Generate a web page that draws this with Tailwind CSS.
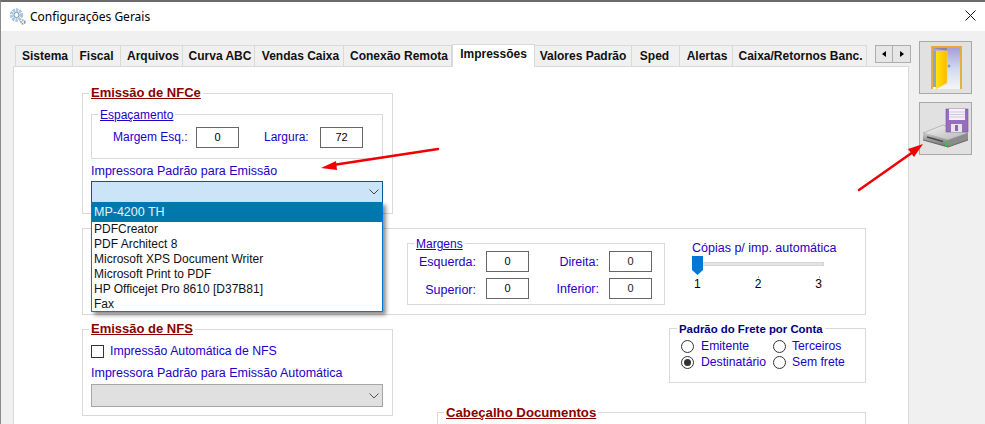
<!DOCTYPE html>
<html lang="pt-BR">
<head>
    <meta charset="UTF-8">
    <title>Configurações Gerais</title>
    <script src="https://cdn.jsdelivr.net/npm/@tailwindcss/browser@4"></script>
</head>
<body class="bg-white">
<div class="relative w-[985px] h-[424px] overflow-hidden flex flex-col border-t-2 border-l border-t-[#6b6b6b] border-l-[#8a8a8a] font-['Liberation_Sans',Arial,sans-serif] text-[12px] text-[#2200c8]">

    <!-- barra de titulo -->
    <div class="h-[29px] shrink-0 bg-white flex items-center text-black font-['Noto_Sans',sans-serif] pl-[8px] pr-[9px]">
        <svg width="18" height="17" viewBox="0 0 18 17" class="mr-[3px]">
            <circle cx="7.5" cy="7" r="5" fill="none" stroke="#a9c4dc" stroke-width="3.4" stroke-dasharray="2.4 0.8"/>
            <circle cx="7.5" cy="7" r="2.6" fill="#fff" stroke="#6d8eac" stroke-width="1"/>
            <circle cx="14" cy="14" r="2" fill="#e4eaf0" stroke="#6f7f8f" stroke-width="1.2" stroke-dasharray="1.5 1"/>
        </svg>
        <span>Configurações Gerais</span>
        <svg width="11" height="11" viewBox="0 0 11 11" class="ml-auto -mt-[2px]">
            <path d="M0.5 0.5L10.5 10.5M10.5 0.5L0.5 10.5" stroke="#111" stroke-width="1"/>
        </svg>
    </div>

    <div class="flex-1 bg-[#f0f0f0] flex overflow-hidden pl-[12px]">
        <div class="w-[897px] shrink-0 flex flex-col">
            <!-- abas -->
            <div class="h-[35px] shrink-0 flex items-end font-bold text-[12px] text-[#111] relative">
                <div class="flex items-end pl-[2px]">
                    <div class="w-[58px] h-[21px] pl-[2px] flex items-center justify-center border border-b-0 border-[#d9d9d9] bg-[#f0f0f0]">Sistema</div>
                    <div class="w-[48px] h-[21px] flex items-center justify-center border border-b-0 border-l-0 border-[#d9d9d9] bg-[#f0f0f0]">Fiscal</div>
                    <div class="w-[62px] h-[21px] pl-[3px] flex items-center justify-center border border-b-0 border-l-0 border-[#d9d9d9] bg-[#f0f0f0]">Arquivos</div>
                    <div class="w-[72px] h-[21px] pl-[3px] flex items-center justify-center border border-b-0 border-l-0 border-[#d9d9d9] bg-[#f0f0f0]">Curva ABC</div>
                    <div class="w-[89px] h-[21px] pl-[3px] flex items-center justify-center border border-b-0 border-l-0 border-[#d9d9d9] bg-[#f0f0f0]">Vendas Caixa</div>
                    <div class="w-[108px] h-[21px] pl-[3px] flex items-center justify-center border border-b-0 border-l-0 border-[#d9d9d9] bg-[#f0f0f0]">Conexão Remota</div>
                    <div class="w-[83px] h-[23px] flex items-start justify-center border border-b-0 border-[#d9d9d9] bg-white relative z-10 -mb-px">Impressões</div>
                    <div class="w-[97px] h-[21px] flex items-center justify-center border border-b-0 border-l-0 border-[#d9d9d9] bg-[#f0f0f0]">Valores Padrão</div>
                    <div class="w-[48px] h-[21px] pr-[2px] flex items-center justify-center border border-b-0 border-l-0 border-[#d9d9d9] bg-[#f0f0f0]">Sped</div>
                    <div class="w-[53px] h-[21px] pl-[2px] flex items-center justify-center border border-b-0 border-l-0 border-[#d9d9d9] bg-[#f0f0f0]">Alertas</div>
                    <div class="w-[134px] h-[21px] pl-[2px] flex items-center justify-center border border-b-0 border-l-0 border-[#d9d9d9] bg-[#f0f0f0]">Caixa/Retornos Banc.</div>
                </div>
                <div class="flex ml-[8px] mb-[3px]">
                    <div class="w-[18px] h-[18px] border border-[#adadad] bg-[#e6e6e6] flex items-center justify-center">
                        <svg width="4" height="6" viewBox="0 0 4 6"><path d="M4 0L0 3L4 6Z" fill="#000"/></svg>
                    </div>
                    <div class="w-[18px] h-[18px] border border-l-0 border-[#adadad] bg-[#e6e6e6] flex items-center justify-center">
                        <svg width="4" height="6" viewBox="0 0 4 6"><path d="M0 0L4 3L0 6Z" fill="#000"/></svg>
                    </div>
                </div>
            </div>

            <!-- painel da aba Impressoes -->
            <div class="flex-1 bg-white border-t border-l border-r border-[#d9d9d9] pl-[68px] pt-[26px] w-[896px]">

                <!-- Emissao de NFCe -->
                <div class="relative w-[311px] h-[121px] border border-[#d9d9d9] pl-[8px] pr-[9px] pt-[20px] z-20">
                    <span class="absolute left-[6px] -top-[9px] px-[2px] bg-white text-[13px] leading-[16px] font-bold underline text-[#8b0000]">Emissão de NFCe</span>
                    <div class="relative h-[45px] border border-[#d9d9d9] flex items-center pt-[1px]">
                        <span class="absolute left-[6px] -top-[7px] px-[2px] bg-white leading-[14px] underline">Espaçamento</span>
                        <span class="ml-[21px] w-[83px]">Margem Esq.:</span>
                        <div class="w-[43px] h-[21px] border border-[#666] flex items-center justify-center text-[11px] text-black">0</div>
                        <span class="ml-[25px] w-[56px]">Largura:</span>
                        <div class="w-[43px] h-[21px] border border-[#666] flex items-center justify-center text-[11px] text-black">72</div>
                    </div>
                    <div class="mt-[5px] leading-[14px] h-[17px] text-[12.5px]">Impressora Padrão para Emissão</div>
                    <div class="relative h-[22px] border border-[#005a9e] bg-[#cce4f7] flex items-center justify-end pr-[3px]">
                        <svg width="10" height="6" viewBox="0 0 10 6"><path d="M0.5 0.5L5 5L9.5 0.5" fill="none" stroke="#444"/></svg>
                        <!-- lista aberta -->
                        <div class="absolute -left-px -right-px top-[20px] h-[110px] bg-white border-x border-b border-[#0078d7] text-[#111] shadow-[3px_3px_4px_rgba(0,0,0,0.45)] leading-[15px]">
                            <div class="h-[20px] bg-[#0077ad] text-[#e8f4fa] text-[12.5px] pl-[2px] flex items-center">MP-4200 TH</div>
                            <div class="pl-[2px]">PDFCreator</div>
                            <div class="pl-[2px]">PDF Architect 8</div>
                            <div class="pl-[2px]">Microsoft XPS Document Writer</div>
                            <div class="pl-[2px]">Microsoft Print to PDF</div>
                            <div class="pl-[2px]">HP Officejet Pro 8610 [D37B81]</div>
                            <div class="pl-[2px]">Fax</div>
                        </div>
                    </div>
                </div>

                <!-- Margens e copias -->
                <div class="mt-[14px] w-[784px] h-[87px] border border-[#d9d9d9] flex pl-[324px] pt-[14px]">
                    <div class="relative w-[258px] h-[62px] border border-[#d9d9d9] grid grid-cols-[68px_43px_60px_43px] grid-rows-[21px_21px] gap-x-[10px] gap-y-[6px] items-center justify-start pt-[7px] text-[12.5px]">
                        <span class="absolute left-[6px] -top-[7px] px-[2px] bg-white leading-[14px] underline text-[12px]">Margens</span>
                        <span class="text-right mt-[2px]">Esquerda:</span>
                        <div class="h-[21px] border border-[#666] flex items-center justify-center text-[11px] text-black">0</div>
                        <span class="text-right mt-[2px]">Direita:</span>
                        <div class="h-[21px] border border-[#666] flex items-center justify-center text-[11px] text-[#2a1a1a]">0</div>
                        <span class="text-right mt-[4px]">Superior:</span>
                        <div class="h-[21px] border border-[#666] flex items-center justify-center text-[11px] text-black">0</div>
                        <span class="text-right mt-[2px]">Inferior:</span>
                        <div class="h-[21px] border border-[#666] flex items-center justify-center text-[11px] text-[#2a1a1a]">0</div>
                    </div>
                    <div class="ml-[27px] w-[146px] -mt-[2px]">
                        <div class="leading-[14px] text-[12.5px] whitespace-nowrap">Cópias p/ imp. automática</div>
                        <div class="relative h-[19px] mt-[1px]">
                            <div class="absolute left-0 right-[14px] top-[6px] h-[4px] bg-[#e3e5e5] border border-[#d6d6d6]"></div>
                            <svg width="11" height="19" viewBox="0 0 11 19" class="absolute left-0 top-0"><path d="M0 0H11V14L5.5 19L0 14Z" fill="#0078d7"/></svg>
                            <span class="absolute left-[66px] top-[20px] w-px h-[2px] bg-[#b5b5b5]"></span>
                            <span class="absolute left-[127px] top-[20px] w-px h-[2px] bg-[#b5b5b5]"></span>
                        </div>
                        <div class="flex justify-between w-[130px] text-black leading-[14px] mt-[2px] pl-[2px]">
                            <span>1</span><span>2</span><span>3</span>
                        </div>
                    </div>
                </div>

                <!-- NFS, frete e cabecalho -->
                <div class="mt-[13px] flex items-start">
                    <div class="relative w-[311px] h-[87px] mt-px border border-[#d9d9d9] pl-[8px] pr-[9px] pt-[14px]">
                        <span class="absolute left-[6px] -top-[9px] px-[2px] bg-white text-[13px] leading-[16px] font-bold underline text-[#8b0000]">Emissão de NFS</span>
                        <div class="flex items-center h-[14px] text-[12.3px]">
                            <div class="w-[13px] h-[13px] border border-[#333] bg-white mr-[6px]"></div>
                            <span>Impressão Automática de NFS</span>
                        </div>
                        <div class="mt-[8px] leading-[14px] h-[18px] text-[12.5px]">Impressora Padrão para Emissão Automática</div>
                        <div class="h-[23px] border border-[#a6a6a6] bg-[#e0e0e0] flex items-center justify-end pr-[3px]">
                            <svg width="10" height="6" viewBox="0 0 10 6"><path d="M0.5 0.5L5 5L9.5 0.5" fill="none" stroke="#555"/></svg>
                        </div>
                    </div>
                    <div class="flex flex-col items-end w-[473px]">
                        <div class="relative w-[197px] h-[55px] border border-[#d9d9d9] grid grid-cols-[92px_1fr] grid-rows-[16px_16px] pl-[11px] pt-[9px] items-center text-[12.2px]">
                            <span class="absolute left-[7px] -top-[7px] px-[2px] bg-white leading-[14px] text-[11.4px] font-bold text-[#000080] whitespace-nowrap">Padrão do Frete por Conta</span>
                            <div class="flex items-center"><span class="w-[13px] h-[13px] rounded-full border border-[#333] mr-[7px]"></span>Emitente</div>
                            <div class="flex items-center"><span class="w-[13px] h-[13px] rounded-full border border-[#333] mr-[6px]"></span>Terceiros</div>
                            <div class="flex items-center whitespace-nowrap"><span class="w-[13px] h-[13px] rounded-full border border-[#333] mr-[7px] flex items-center justify-center"><span class="w-[7px] h-[7px] rounded-full bg-[#333]"></span></span>Destinatário</div>
                            <div class="flex items-center"><span class="w-[13px] h-[13px] rounded-full border border-[#333] mr-[6px]"></span>Sem frete</div>
                        </div>
                        <div class="relative w-[429px] h-[40px] mt-[29px] border border-[#d9d9d9]">
                            <span class="absolute left-[6px] -top-[8px] px-[2px] bg-white text-[13.2px] leading-[16px] font-bold underline text-[#8b0000]">Cabeçalho Documentos</span>
                        </div>
                    </div>
                </div>
            </div>
        </div>

        <!-- botoes laterais -->
        <div class="ml-[9px] pt-[10px] flex flex-col gap-[8px]">
            <div class="w-[53px] h-[53px] border border-[#a8a8a8] bg-[#e1e1e1] flex items-center justify-center">
                <svg width="51" height="51" viewBox="0 0 51 51">
                    <defs>
                        <linearGradient id="sky" x1="0" y1="0" x2="0" y2="1"><stop offset="0" stop-color="#a39bd8"/><stop offset="0.5" stop-color="#cfd8ee"/><stop offset="1" stop-color="#f4f6f8"/></linearGradient>
                        <linearGradient id="door" x1="0" y1="0" x2="1" y2="0"><stop offset="0" stop-color="#ffe600"/><stop offset="1" stop-color="#ffb800"/></linearGradient>
                    </defs>
                    <rect x="12" y="5" width="29" height="42" fill="url(#sky)"/>
                    <path d="M12 47V5H41V47" fill="none" stroke="#eaa92a" stroke-width="1.8"/>
                    <path d="M13 6H27V9" fill="#8d82b8"/>
                    <path d="M16 9L27 9V41L16 47Z" fill="url(#door)" stroke="#f6d46a" stroke-width="0.6"/>
                    <rect x="13" y="9" width="3" height="36" fill="#8fa6c0"/>
                    <circle cx="29" cy="24" r="1.5" fill="#7f9fbf"/>
                </svg>
            </div>
            <div class="w-[53px] h-[53px] border border-[#a8a8a8] bg-[#e1e1e1] flex items-center justify-center">
                <svg width="51" height="51" viewBox="0 0 51 51">
                    <defs>
                        <linearGradient id="top" x1="0" y1="0" x2="1" y2="1"><stop offset="0" stop-color="#f4f4f4"/><stop offset="1" stop-color="#b4b4b4"/></linearGradient>
                        <linearGradient id="face" x1="0" y1="0" x2="0" y2="1"><stop offset="0" stop-color="#c8c8c8"/><stop offset="1" stop-color="#6e6e6e"/></linearGradient>
                    </defs>
                    <path d="M3 30L23 22L48 30L28 37Z" fill="url(#top)" stroke="#8a8a8a" stroke-width="0.5"/>
                    <path d="M3 30L28 37V44L3 37Z" fill="url(#face)"/>
                    <path d="M28 37L48 30V37L28 44Z" fill="#8c8c8c"/>
                    <path d="M3 37L28 44L48 37" fill="none" stroke="#555" stroke-width="0.8"/>
                    <path d="M7 34L23 38.5" stroke="#4a4a4a" stroke-width="1.4"/>
                    <rect x="25" y="38.5" width="2.4" height="5" fill="#35c23f"/>
                    <rect x="26" y="6" width="22" height="23" fill="#9a6cc0" stroke="#77509c" stroke-width="0.6"/>
                    <rect x="29" y="6" width="16" height="11" fill="#f5f2f8"/>
                    <path d="M29 9H45M29 11.5H45M29 14H45" stroke="#c3b3d3" stroke-width="0.7"/>
                    <rect x="31" y="21" width="11" height="8" fill="#e8e4ec"/>
                    <rect x="35" y="22" width="3" height="6" fill="#8a6aa6"/>
                </svg>
            </div>
        </div>
    </div>

    <!-- setas vermelhas desenhadas sobre a captura -->
    <svg class="absolute left-0 top-0 z-30 pointer-events-none" width="985" height="424" viewBox="0 0 985 424">
        <path d="M437 147L332 163" stroke="#f00000" stroke-width="2.5" stroke-linecap="round"/>
        <path d="M320 166L335 159L336 168Z" fill="#f00000"/>
        <path d="M858 188L912 150" stroke="#f00000" stroke-width="2.5" stroke-linecap="round"/>
        <path d="M922 142L907 147L913 155Z" fill="#f00000"/>
    </svg>
</div>
</body>
</html>
